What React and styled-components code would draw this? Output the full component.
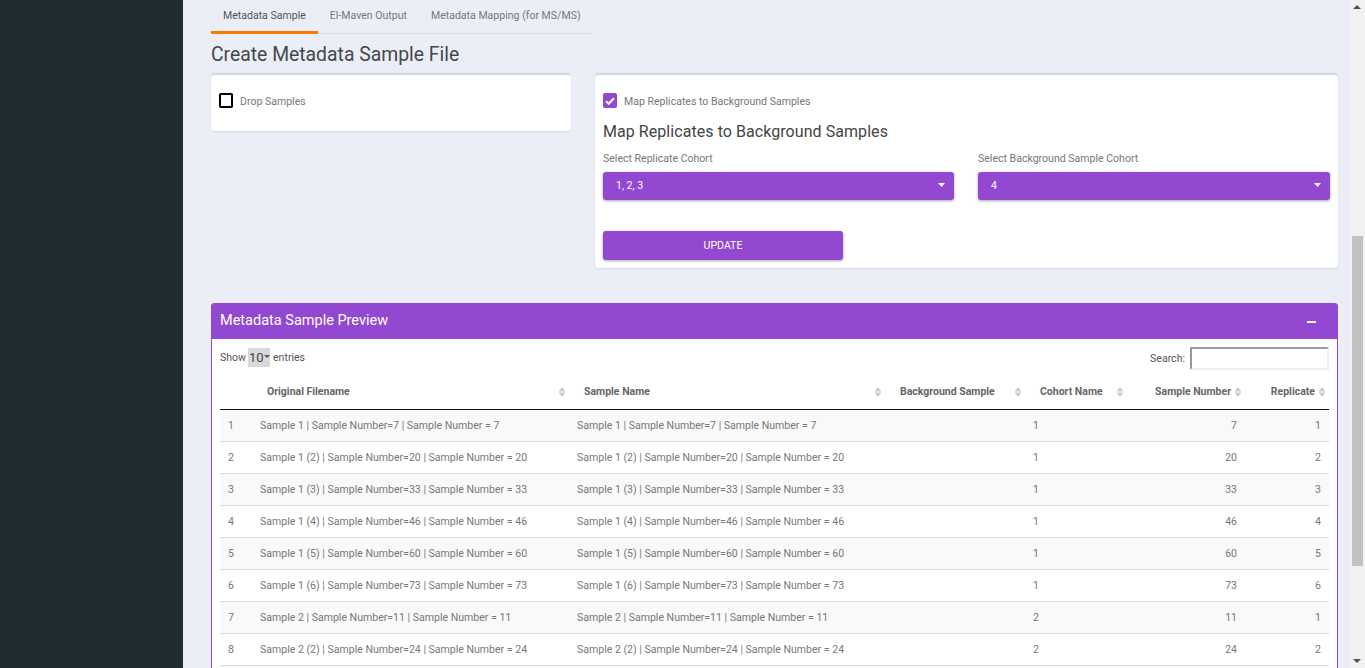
import React from "react";
import styled, { createGlobalStyle } from "styled-components";

const Global = createGlobalStyle`
  html, body { margin: 0; padding: 0; height: 100%; overflow: hidden; }
  body { font-family: Roboto, "Liberation Sans", sans-serif; background: #ebeef6; }
  * { box-sizing: border-box; }
`;
const purple = "#9348d1";

const Shell = styled.div`display: flex; height: 668px; width: 1365px; overflow: hidden;`;
const Sidebar = styled.aside`flex: 0 0 183px; background: #1f2d33;`;
const Main = styled.main`flex: 1; min-width: 0; padding: 0 12px 0 28px; background: #ebeef6;`;

const ScrollTrack = styled.div`flex: 0 0 15px; background: #f1f1f1; position: relative; display: flex; flex-direction: column; align-items: center;`;
const ScrollThumb = styled.div`width: 11px; height: 330px; margin-top: 236px; background: #c1c1c1;`;
const ScrollArrow = styled.svg`
  position: absolute; left: 3px; width: 8px; height: 4px; fill: #505050;
  ${p => p.$down ? "bottom: 5px;" : "top: 5px;"}
`;

const Tabs = styled.nav`display: inline-flex; height: 34px; border-bottom: 1px solid #dcdee6; vertical-align: top;`;
const Tab = styled.div`
  padding: 0 12px; height: 34px; line-height: 32px; font-size: 10.56px; white-space: nowrap;
  color: ${p => p.$active ? "#555" : "#777"};
  border-bottom: ${p => p.$active ? "3px solid #f57c00" : "none"};
`;
const PageTitle = styled.h1`margin: 8px 0 5px; font-size: 19.35px; line-height: 26px; font-weight: 400; color: #44484c;`;

const CardRow = styled.div`display: flex; gap: 24px; align-items: flex-start;`;
const Card = styled.section`
  background: #fff; border-top: 2px solid #d3d6e3; border-radius: 4px;
  box-shadow: 0 1px 2px rgba(60,70,110,.13);
  padding: 19px 8px 8px;
  width: ${p => p.$w}px; height: ${p => p.$h}px;
`;
const CheckRow = styled.label`display: flex; align-items: center; height: 14px; gap: 7px; font-size: 10.56px; color: #777;`;
const EmptyBox = styled.span`width: 14px; height: 15px; margin-top: -1px; border: 2px solid #000; border-radius: 2px; background: #fff; outline: 0.5px solid #000; outline-offset: -1px;`;
const CheckedBox = styled.span`width: 14px; height: 15px; margin-top: -1px; border-radius: 2px; background: ${purple}; display: flex; align-items: center; justify-content: center;`;
const SubTitle = styled.h2`margin: 13px 0 0; font-size: 16px; letter-spacing: .06px; line-height: 22px; font-weight: 400; color: #444;`;
const SelectGrid = styled.div`display: flex; gap: 24px; margin-top: 9px;`;
const Field = styled.div`width: ${p => p.$w}px;`;
const FieldLabel = styled.div`font-size: 10.56px; line-height: 14px; color: #777; margin-bottom: 6px;`;
const SelectBox = styled.div`
  height: 28px; background: ${purple}; color: #fff; border-radius: 3px; font-size: 10.56px;
  display: flex; align-items: center; justify-content: space-between; padding: 0 9px 2px 13px;
  box-shadow: 0 1px 3px rgba(0,0,0,.35);
`;
const Caret = styled.svg`width: 7px; height: 4px; fill: #fff;`;
const Button = styled.button`
  display: block; width: 240px; height: 29px; margin-top: 31px; border: 0; border-radius: 3px;
  background: ${purple}; color: #fff; font: 400 10.56px Roboto, sans-serif;
  box-shadow: 0 1px 3px rgba(0,0,0,.35);
`;

const Preview = styled.section`margin-top: 35px; background: #fff; border: 1px solid ${purple}; border-top: 0; border-radius: 4px 4px 0 0;`;
const PreviewHead = styled.header`
  height: 36px; margin: 0 -1px; padding: 0 22px 2px 9px; background: ${purple}; color: #fff; border-radius: 4px 4px 0 0;
  display: flex; align-items: center; justify-content: space-between; font-size: 14.5px;
`;
const Minus = styled.span`width: 9px; height: 2px; background: #fff; margin-top: 3px;`;
const PreviewBody = styled.div`padding: 8px 8px 0;`;
const Controls = styled.div`display: flex; justify-content: space-between; align-items: flex-start; height: 27px; font-size: 10.56px; color: #555;`;
const ShowGroup = styled.div`display: flex; align-items: center; height: 20px;`;
const LenSelect = styled.span`
  display: inline-flex; align-items: center; width: 22px; height: 19px; margin: 0 3px 0 2px; padding-left: 1px;
  background: #d9d9d9; color: #444; font-size: 13px;
`;
const LenCaret = styled.svg`width: 6px; height: 3px; fill: #555; margin-top: -2px;`;
const SearchGroup = styled.label`display: flex; align-items: center; gap: 5px; height: 23px;`;
const SearchInput = styled.input`width: 139px; height: 23px; border: 2px solid; border-color: #999 #eee #eee #999; background: #fff; padding: 0;`;

const Table = styled.table`width: 1109px; table-layout: fixed; border-collapse: collapse; font-size: 10.56px; margin-top: 0;`;
const Col = styled.col`width: ${p => p.$w}px;`;
const Th = styled.th`
  height: 35px; padding: 0 14px 0 15px; border-bottom: 1px solid #111; color: #666; font-weight: 700; font-size: 10.5px;
  text-align: ${p => p.$right ? "right" : "left"}; position: relative; white-space: nowrap;
`;
const Sort = styled.svg`position: absolute; right: 3px; top: 12px; width: 8px; height: 12px; fill: #ccc;`;
const Tr = styled.tr`background: ${p => p.$odd ? "#f9f9f9" : "#fff"};`;
const Td = styled.td`
  height: 32px; padding: 0 8px; border-bottom: 1px solid #ddd; color: #777; white-space: nowrap;
  text-align: ${p => p.$right ? "right" : "left"};
`;

const SortIcon = () => <Sort viewBox="0 0 8 12"><path d="M4 1l3.5 4.5h-7zM4 11L.5 6.5h7z" /></Sort>;
const CaretIcon = () => <Caret viewBox="0 0 7 4"><path d="M0 0h7L3.5 4z" /></Caret>;

const rows = [
  [1, "Sample 1", 7, 1, 1],
  [2, "Sample 1 (2)", 20, 1, 2],
  [3, "Sample 1 (3)", 33, 1, 3],
  [4, "Sample 1 (4)", 46, 1, 4],
  [5, "Sample 1 (5)", 60, 1, 5],
  [6, "Sample 1 (6)", 73, 1, 6],
  [7, "Sample 2", 11, 2, 1],
  [8, "Sample 2 (2)", 24, 2, 2],
];

export default function App() {
  return (
    <Shell>
      <Global />
      <Sidebar />
      <Main>
        <Tabs>
          <Tab $active>Metadata Sample</Tab>
          <Tab>El-Maven Output</Tab>
          <Tab>Metadata Mapping (for MS/MS)</Tab>
        </Tabs>
        <PageTitle>Create Metadata Sample File</PageTitle>
        <CardRow>
          <Card $w={360} $h={58}>
            <CheckRow><EmptyBox />Drop Samples</CheckRow>
          </Card>
          <Card $w={743} $h={195}>
            <CheckRow>
              <CheckedBox>
                <svg width="10" height="8" viewBox="0 0 10 8"><path d="M1 4.2l2.7 2.6L9 1.2" fill="none" stroke="#fff" strokeWidth="2" /></svg>
              </CheckedBox>
              Map Replicates to Background Samples
            </CheckRow>
            <SubTitle>Map Replicates to Background Samples</SubTitle>
            <SelectGrid>
              <Field $w={351}>
                <FieldLabel>Select Replicate Cohort</FieldLabel>
                <SelectBox>1, 2, 3<CaretIcon /></SelectBox>
              </Field>
              <Field $w={352}>
                <FieldLabel>Select Background Sample Cohort</FieldLabel>
                <SelectBox>4<CaretIcon /></SelectBox>
              </Field>
            </SelectGrid>
            <Button>UPDATE</Button>
          </Card>
        </CardRow>
        <Preview>
          <PreviewHead>Metadata Sample Preview<Minus /></PreviewHead>
          <PreviewBody>
            <Controls>
              <ShowGroup>
                Show
                <LenSelect>10<LenCaret viewBox="0 0 6 3"><path d="M0 0h6L3 3z" /></LenCaret></LenSelect>
                entries
              </ShowGroup>
              <SearchGroup>Search:<SearchInput /></SearchGroup>
            </Controls>
            <Table>
              <colgroup>
                {[32, 317, 316, 140, 102, 118, 84].map((w, i) => <Col key={i} $w={w} />)}
              </colgroup>
              <thead>
                <tr>
                  <Th />
                  <Th>Original Filename<SortIcon /></Th>
                  <Th>Sample Name<SortIcon /></Th>
                  <Th>Background Sample<SortIcon /></Th>
                  <Th>Cohort Name<SortIcon /></Th>
                  <Th $right>Sample Number<SortIcon /></Th>
                  <Th $right>Replicate<SortIcon /></Th>
                </tr>
              </thead>
              <tbody>
                {rows.map(([n, name, num, cohort, rep]) => {
                  const full = `${name} | Sample Number=${num} | Sample Number = ${num}`;
                  return (
                    <Tr key={n} $odd={n % 2 === 1}>
                      <Td>{n}</Td>
                      <Td>{full}</Td>
                      <Td>{full}</Td>
                      <Td />
                      <Td>{cohort}</Td>
                      <Td $right>{num}</Td>
                      <Td $right>{rep}</Td>
                    </Tr>
                  );
                })}
                <Tr $odd><Td colSpan={7} /></Tr>
              </tbody>
            </Table>
          </PreviewBody>
        </Preview>
      </Main>
      <ScrollTrack>
        <ScrollArrow viewBox="0 0 8 4"><path d="M4 0l4 4H0z" /></ScrollArrow>
        <ScrollThumb />
        <ScrollArrow $down viewBox="0 0 8 4"><path d="M0 0h8L4 4z" /></ScrollArrow>
      </ScrollTrack>
    </Shell>
  );
}
